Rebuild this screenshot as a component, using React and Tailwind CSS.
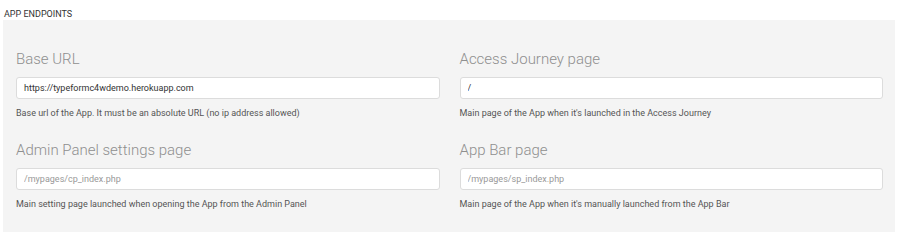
import React from "react";

const fields = [
  [
    {
      label: "Base URL",
      value: "https://typeformc4wdemo.herokuapp.com",
      help: "Base url of the App. It must be an absolute URL (no ip address allowed)",
    },
    {
      label: "Access Journey page",
      value: "/",
      help: "Main page of the App when it's launched in the Access Journey",
    },
  ],
  [
    {
      label: "Admin Panel settings page",
      placeholder: "/mypages/cp_index.php",
      help: "Main setting page launched when opening the App from the Admin Panel",
    },
    {
      label: "App Bar page",
      placeholder: "/mypages/sp_index.php",
      help: "Main page of the App when it's manually launched from the App Bar",
    },
  ],
];

function Field({ field }) {
  return (
    <div className="flex flex-col">
      <label className="text-[15px] leading-[20px] font-light text-[#8f8f8f]">
        {field.label}
      </label>
      <input
        className="mt-[8px] h-[22px] w-full rounded-[3px] border border-[#dcdcdc] bg-white px-[7px] text-[9px] text-[#333] placeholder:text-[#999] outline-none"
        type="text"
        defaultValue={field.value}
        placeholder={field.placeholder}
      />
      <p className="mt-[8px] text-[9px] leading-[12px] text-[#555]">{field.help}</p>
    </div>
  );
}

export default function App() {
  return (
    <div className="h-[240px] w-[900px] bg-white font-['Roboto',sans-serif]">
      <div className="px-[4px] pt-[8px] text-[9px] leading-[12px] text-[#333]">
        APP ENDPOINTS
      </div>
      <div className="mx-[3px] w-[892px] bg-[#f4f4f4] pl-[13px] pr-[12px] pt-[29px] pb-[22px]">
        <div className="flex flex-col gap-[21px]">
          {fields.map((row, i) => (
            <div key={i} className="grid grid-cols-2 gap-x-[20px]">
              {row.map((f) => (
                <Field key={f.label} field={f} />
              ))}
            </div>
          ))}
        </div>
      </div>
    </div>
  );
}
